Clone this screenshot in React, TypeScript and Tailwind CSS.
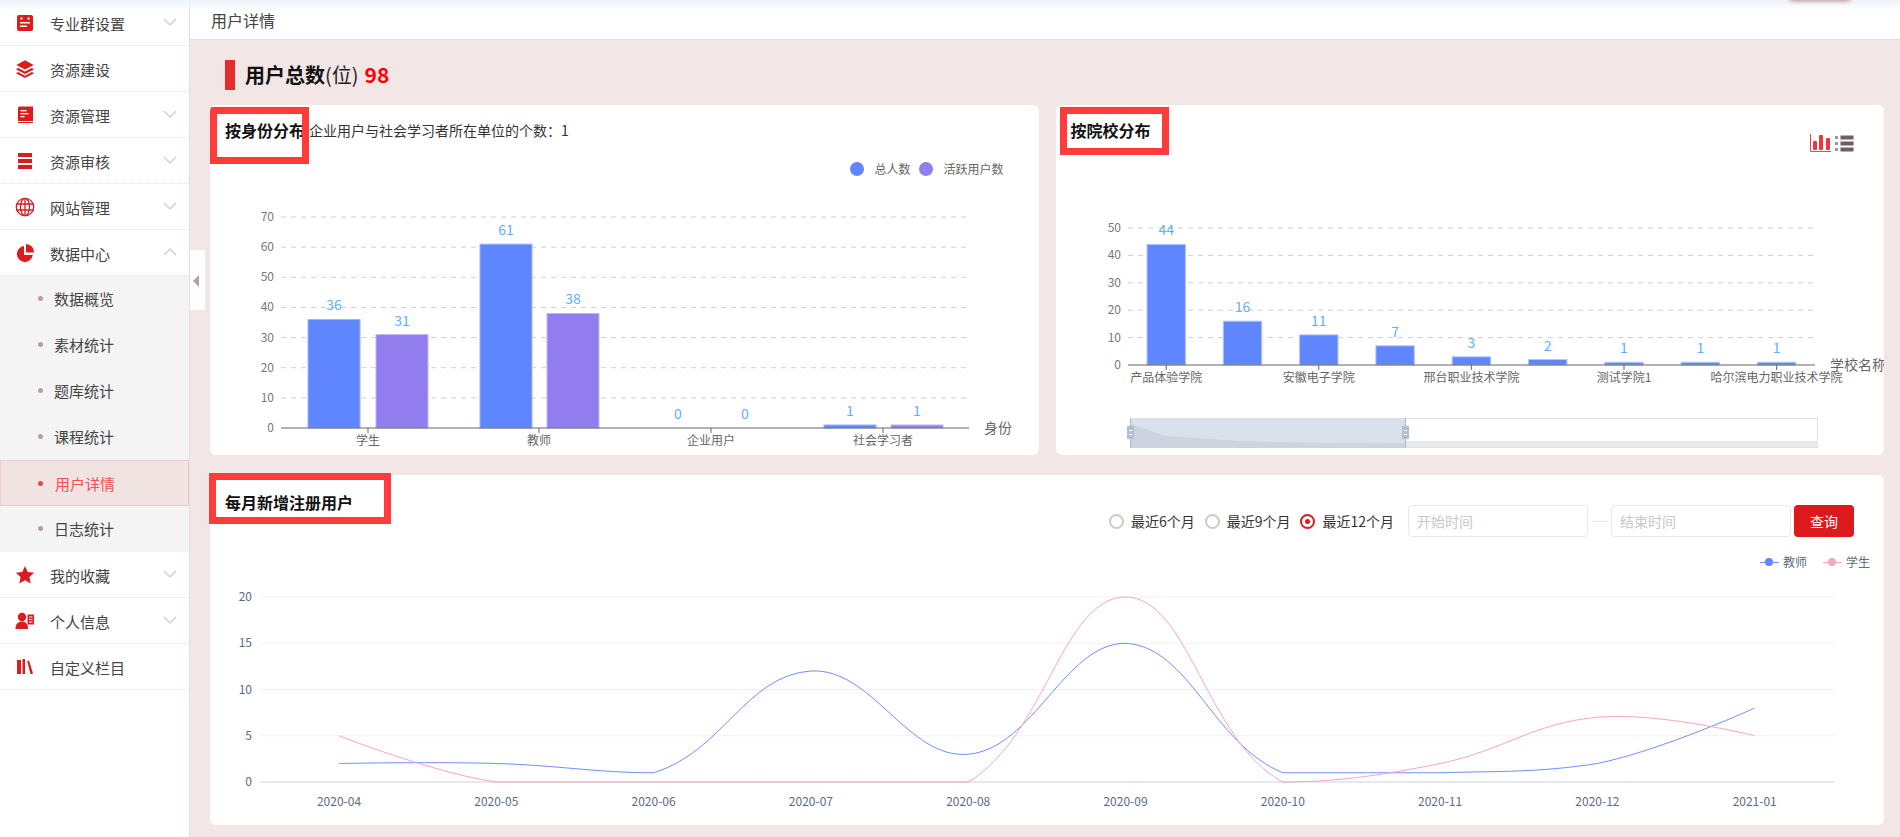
import React from 'react';

const FONT = "font-['Noto_Sans_CJK_SC','Noto_Sans',sans-serif]";
const RED = '#dd1a1e';

type IconProps = { className?: string };

const ProfessionIcon = () => (
    <svg width="20" height="20" viewBox="0 0 20 20">
        <rect x="2" y="2" width="16" height="16" rx="2" fill={RED} />
        <rect x="5.5" y="4.5" width="2" height="2" fill="#fff" />
        <rect x="12.5" y="4.5" width="2" height="2" fill="#fff" />
        <rect x="5" y="9" width="10" height="1.5" fill="#fff" />
        <rect x="5" y="12.5" width="7" height="1.5" fill="#fff" />
    </svg>
);

const LayersIcon = () => (
    <svg width="22" height="22" viewBox="0 0 22 22">
        <path d="M11 1.5 L20.5 6.5 L11 11.5 L1.5 6.5 Z" fill={RED} />
        <path d="M3.5 9.8 L1 11.2 L11 16.5 L21 11.2 L18.5 9.8 L11 13.8 Z" fill={RED} />
        <path d="M3.5 14.3 L1 15.7 L11 21 L21 15.7 L18.5 14.3 L11 18.3 Z" fill={RED} />
    </svg>
);

const BookIcon = () => (
    <svg width="20" height="20" viewBox="0 0 20 20">
        <path d="M3 3 a1.5 1.5 0 0 1 1.5 -1.5 H18 V16 H3 Z" fill={RED} />
        <rect x="3" y="17" width="15" height="1" fill={RED} />
        <rect x="5.5" y="5" width="6" height="1.3" fill="#fff" />
        <rect x="5.5" y="8" width="8" height="1.3" fill="#fff" />
        <rect x="5.5" y="11" width="4" height="1.3" fill="#fff" />
    </svg>
);

const BarsIcon = () => (
    <svg width="20" height="20" viewBox="0 0 20 20">
        <rect x="3" y="2" width="14" height="4" fill={RED} />
        <rect x="3" y="8" width="14" height="4" fill={RED} />
        <rect x="3" y="14" width="14" height="4" fill={RED} />
    </svg>
);

const GlobeIcon = () => (
    <svg width="20" height="20" viewBox="0 0 20 20" fill="none" stroke={RED} strokeWidth="1.3">
        <circle cx="10" cy="10" r="8.7" />
        <ellipse cx="10" cy="10" rx="4.5" ry="8.7" />
        <path d="M10 1.3 V18.7 M1.6 7 H18.4 M1.6 13 H18.4" />
    </svg>
);

const PieIcon = () => (
    <svg width="20" height="20" viewBox="0 0 20 20">
        <path d="M9 3 A8 8 0 1 0 17.8 12 H9 Z" fill={RED} />
        <path d="M11 1 A8 8 0 0 1 19 9.5 H11 Z" fill={RED} />
    </svg>
);

const StarIcon = () => (
    <svg width="20" height="20" viewBox="0 0 20 20">
        <path d="M10 1 L12.7 7 L19.2 7.7 L14.4 12.1 L15.7 18.5 L10 15.3 L4.3 18.5 L5.6 12.1 L0.8 7.7 L7.3 7 Z" fill={RED} />
    </svg>
);

const UserCardIcon = () => (
    <svg width="20" height="20" viewBox="0 0 20 20">
        <circle cx="7" cy="6" r="4.2" fill={RED} />
        <path d="M0.5 18 C0.5 12.5 3.5 10.5 7 10.5 C10.5 10.5 13 12.5 13 18 Z" fill={RED} />
        <rect x="12.5" y="3.5" width="6.5" height="10" fill={RED} />
        <rect x="14" y="5.5" width="3.5" height="1" fill="#fff" />
        <rect x="14" y="8" width="3.5" height="1" fill="#fff" />
        <rect x="14" y="10.5" width="3.5" height="1" fill="#fff" />
    </svg>
);

const BooksIcon = () => (
    <svg width="20" height="20" viewBox="0 0 20 20">
        <rect x="2" y="3" width="4" height="14" fill={RED} />
        <rect x="7.5" y="2" width="2.5" height="15" fill={RED} />
        <path d="M12.2 4 L14 3.4 L18 16.4 L15.5 17.2 Z" fill={RED} />
    </svg>
);

const Chevron = ({ up }: { up?: boolean }) => (
    <svg width="14" height="8" viewBox="0 0 14 8" fill="none" stroke="#cfcfcf" strokeWidth="1.4" className="mb-[2px]">
        <path d={up ? 'M1 7 L7 1 L13 7' : 'M1 1 L7 7 L13 1'} />
    </svg>
);

function MenuRow({ icon, label, arrow }: { icon: React.ReactNode; label: string; arrow?: 'up' | 'down' }) {
    return (
        <div className="flex h-[46px] items-center border-b border-dotted border-[#e2e2e2] pl-[15px] pr-[12px]">
            <span className="flex w-[20px] justify-center">{icon}</span>
            <span className="ml-[15px] flex-1 pt-[1px] text-[15px] leading-none text-[#444]">{label}</span>
            {arrow && <Chevron up={arrow === 'up'} />}
        </div>
    );
}

function SubRow({ label, active }: { label: string; active?: boolean }) {
    return (
        <div
            className={
                active
                    ? 'flex h-[46px] items-center border border-[#eecbcb] bg-[#f2e3e3] pl-[37px] text-[#f24f4f]'
                    : 'flex h-[46px] items-center pb-[1px] pl-[38px] text-[#444]'
            }
        >
            <span className={active ? 'h-[5px] w-[5px] rounded-full bg-[#e5484d]' : 'h-[5px] w-[5px] rounded-full bg-[#b89ea2]'}></span>
            <span className={active ? 'ml-[12px] text-[15px] leading-none' : 'ml-[11px] text-[15px] leading-none'}>{label}</span>
        </div>
    );
}

function Sidebar() {
    return (
        <aside className="h-full w-[190px] shrink-0 border-r border-[#eadcdc] bg-white">
            <MenuRow icon={<ProfessionIcon />} label="专业群设置" arrow="down" />
            <MenuRow icon={<LayersIcon />} label="资源建设" />
            <MenuRow icon={<BookIcon />} label="资源管理" arrow="down" />
            <MenuRow icon={<BarsIcon />} label="资源审核" arrow="down" />
            <MenuRow icon={<GlobeIcon />} label="网站管理" arrow="down" />
            <MenuRow icon={<PieIcon />} label="数据中心" arrow="up" />
            <div className="bg-[#f5f4f4]">
                <SubRow label="数据概览" />
                <SubRow label="素材统计" />
                <SubRow label="题库统计" />
                <SubRow label="课程统计" />
                <SubRow label="用户详情" active />
                <SubRow label="日志统计" />
            </div>
            <MenuRow icon={<StarIcon />} label="我的收藏" arrow="down" />
            <MenuRow icon={<UserCardIcon />} label="个人信息" arrow="down" />
            <MenuRow icon={<BooksIcon />} label="自定义栏目" />
        </aside>
    );
}

const CHART_FONT = "'Noto Sans CJK SC', sans-serif";

function Bar({ x, y, w, base, color, edge }: { x: number; y: number; w: number; base: number; color: string; edge: string }) {
    return <rect x={x} y={y} width={w} height={base - y} fill={color} stroke={edge} strokeWidth="1" />;
}

// chart 1: by identity
function IdentityChart() {
    const base = 428;
    const scale = 30.14 / 10;
    const ticks = [0, 10, 20, 30, 40, 50, 60, 70];
    const groups = [
        { name: '学生', center: 368, a: 36, b: 31, ax: 308, bx: 376 },
        { name: '教师', center: 539, a: 61, b: 38, ax: 480, bx: 547 },
        { name: '企业用户', center: 711, a: 0, b: 0, ax: 652, bx: 719 },
        { name: '社会学习者', center: 883, a: 1, b: 1, ax: 824, bx: 891 }
    ];
    return (
        <svg className="block" width="829" height="275" viewBox="210 180 829 275" fontFamily={CHART_FONT}>
            {ticks.map((t) => (
                <g key={t}>
                    {t > 0 && (
                        <line x1="281" x2="966" y1={base - t * scale} y2={base - t * scale} stroke="#cfcfcf" strokeDasharray="5 5" />
                    )}
                    <text x="274" y={base - t * scale + 4} textAnchor="end" fontSize="12" fill="#777">
                        {t}
                    </text>
                </g>
            ))}
            {groups.map((g) => (
                <g key={g.name}>
                    {g.a > 0 && <Bar x={g.ax} y={base - g.a * scale} w={52} base={base} color="#5f85ff" edge="#9db3ff" />}
                    {g.b > 0 && <Bar x={g.bx} y={base - g.b * scale} w={52} base={base} color="#917ded" edge="#c3b7f5" />}
                    <text x={g.ax + 26} y={base - g.a * scale - 9} textAnchor="middle" fontSize="14" fill="#5cb0ff">
                        {g.a}
                    </text>
                    <text x={g.bx + 26} y={base - g.b * scale - 9} textAnchor="middle" fontSize="14" fill="#5cb0ff">
                        {g.b}
                    </text>
                    <line x1={g.center} x2={g.center} y1={base} y2={base + 5} stroke="#666" />
                    <text x={g.center} y={base + 17} textAnchor="middle" fontSize="12" fill="#666">
                        {g.name}
                    </text>
                </g>
            ))}
            <line x1="281" x2="969" y1={base} y2={base} stroke="#666" />
            <text x="984" y={base + 5} fontSize="14" fill="#666">
                身份
            </text>
        </svg>
    );
}

// chart 2: by school, with the zoom slider under it
function SchoolChart() {
    const base = 365;
    const scale = 2.74;
    const ticks = [0, 10, 20, 30, 40, 50];
    const values = [44, 16, 11, 7, 3, 2, 1, 1, 1];
    const labels: Record<number, string> = {
        0: '产品体验学院',
        2: '安徽电子学院',
        4: '邢台职业技术学院',
        6: '测试学院1',
        8: '哈尔滨电力职业技术学院'
    };
    const left = 1128;
    const step = 76.3;
    return (
        <svg className="block" width="828" height="285" viewBox="1056 170 828 285" fontFamily={CHART_FONT}>
            {ticks.map((t) => (
                <g key={t}>
                    {t > 0 && (
                        <line x1="1128" x2="1813" y1={base - t * scale} y2={base - t * scale} stroke="#cfcfcf" strokeDasharray="5 5" />
                    )}
                    <text x="1121" y={base - t * scale + 4} textAnchor="end" fontSize="12" fill="#777">
                        {t}
                    </text>
                </g>
            ))}
            {values.map((v, i) => {
                const x = left + 19 + i * step;
                const cx = x + 19.2;
                return (
                    <g key={i}>
                        <Bar x={x} y={base - v * scale} w={38.4} base={base} color="#5f85ff" edge="#b4c4ff" />
                        <text x={cx} y={base - v * scale - 9} textAnchor="middle" fontSize="14" fill="#5cb0ff">
                            {v}
                        </text>
                        {labels[i] && (
                            <>
                                <line x1={cx} x2={cx} y1={base} y2={base + 5} stroke="#666" />
                                <text x={cx} y={base + 17} textAnchor="middle" fontSize="12" fill="#666">
                                    {labels[i]}
                                </text>
                            </>
                        )}
                    </g>
                );
            })}
            <line x1="1128" x2="1815" y1={base} y2={base} stroke="#666" />
            <text x="1830" y={base + 5} fontSize="14" fill="#666">
                学校名称
            </text>

            <rect x="1130.5" y="418.5" width="687" height="29" fill="#fff" stroke="#dfe2e8" />
            <path d="M1405 442 L1817 442 V447 H1405 Z" fill="#e9ebef" />
            <line x1="1405" x2="1817" y1="442" y2="442" stroke="#d8dbe2" />
            <rect x="1130" y="418" width="275.5" height="30" fill="#dbe1ea" />
            <path d="M1131 424 L1165 436 L1240 441 L1300 442.5 L1405 443 V448 H1131 Z" fill="#cdd4df" />
            <line x1="1130.5" x2="1130.5" y1="418" y2="448" stroke="#a8b8cf" />
            <line x1="1405.5" x2="1405.5" y1="418" y2="448" stroke="#a8b8cf" />
            {[1130.5, 1405.5].map((x) => (
                <g key={x}>
                    <rect x={x - 3.5} y="426" width="7" height="13" fill="#b0bfd4" />
                    <rect x={x - 1.5} y="430" width="3" height="1" fill="#fff" />
                    <rect x={x - 1.5} y="434" width="3" height="1" fill="#fff" />
                </g>
            ))}
        </svg>
    );
}

type Pt = [number, number];

// echarts style smooth line, control points are clamped to the bounding box of the series
function smoothPath(pts: Pt[]) {
    const smooth = 0.4;
    const minY = Math.min(...pts.map((p) => p[1]));
    const maxY = Math.max(...pts.map((p) => p[1]));
    const clamp = (y: number) => Math.max(minY, Math.min(maxY, y));
    let d = `M${pts[0][0]} ${pts[0][1]}`;
    const out: Pt[] = [];
    const inn: Pt[] = [];
    pts.forEach((p, i) => {
        const prev = pts[i - 1];
        const next = pts[i + 1];
        if (!prev || !next) {
            out.push(p);
            inn.push(p);
            return;
        }
        const vx = next[0] - prev[0];
        const vy = next[1] - prev[1];
        const d0 = Math.hypot(p[0] - prev[0], p[1] - prev[1]);
        const d1 = Math.hypot(next[0] - p[0], next[1] - p[1]);
        const ratio = d1 / (d0 + d1);
        out.push([p[0] + vx * smooth * ratio, clamp(p[1] + vy * smooth * ratio)]);
        inn.push([p[0] - vx * smooth * (1 - ratio), clamp(p[1] - vy * smooth * (1 - ratio))]);
    });
    for (let i = 1; i < pts.length; i++) {
        d += ` C${out[i - 1][0]} ${out[i - 1][1]} ${inn[i][0]} ${inn[i][1]} ${pts[i][0]} ${pts[i][1]}`;
    }
    return d;
}

// chart 3: monthly registrations
function MonthlyChart() {
    const base = 782;
    const unit = 9.25;
    const months = ['2020-04', '2020-05', '2020-06', '2020-07', '2020-08', '2020-09', '2020-10', '2020-11', '2020-12', '2021-01'];
    const teacher = [2, 2, 1, 12, 3, 15, 1, 1, 2, 8];
    const student = [5, 0, 0, 0, 0, 20, 0, 2, 7, 5];
    const toPts = (arr: number[]): Pt[] => arr.map((v, i) => [339 + i * 157.3, base - v * unit]);
    return (
        <svg className="block" width="1674" height="250" viewBox="210 575 1674 250" fontFamily={CHART_FONT}>
            {[0, 5, 10, 15, 20].map((t) => (
                <g key={t}>
                    <line x1="260" x2="1834" y1={base - t * unit} y2={base - t * unit} stroke={t === 0 ? '#ccd3dc' : '#eef0f2'} />
                    <text x="252" y={base - t * unit + 4} textAnchor="end" fontSize="12" fill="#5b6b81">
                        {t}
                    </text>
                </g>
            ))}
            <path d={smoothPath(toPts(teacher))} fill="none" stroke="#6d8fff" />
            <path d={smoothPath(toPts(student))} fill="none" stroke="#f7a5c0" />
            {months.map((m, i) => (
                <text key={m} x={339 + i * 157.3} y="806" textAnchor="middle" fontSize="12" fill="#5b6b81">
                    {m}
                </text>
            ))}
        </svg>
    );
}

function ChartToggles() {
    return (
        <div className="flex items-center gap-[4px]">
            <svg width="21" height="19" viewBox="0 0 21 19">
                <path d="M0.5 0 V17.5 H21" fill="none" stroke="#e8474c" />
                <rect x="3" y="7" width="4" height="9" rx="1" fill="#e8383d" />
                <rect x="9" y="1" width="4" height="15" rx="1" fill="#e8383d" />
                <rect x="16" y="4" width="4" height="12" rx="1" fill="#e8383d" />
            </svg>
            <svg width="19" height="17" viewBox="0 0 19 17">
                <rect x="0" y="1" width="3" height="3" fill="#999" />
                <rect x="0" y="7" width="3" height="3" fill="#999" />
                <rect x="0" y="13" width="3" height="3" fill="#999" />
                <rect x="5.5" y="0.5" width="13" height="4" fill="#6b5f5f" />
                <rect x="5.5" y="6.5" width="13" height="4" fill="#6b5f5f" />
                <rect x="5.5" y="12.5" width="13" height="4" fill="#6b5f5f" />
            </svg>
        </div>
    );
}

function Radio({ label, checked }: { label: string; checked?: boolean }) {
    return (
        <label className="flex items-center gap-[7px] text-[14px] leading-none text-[#333]">
            {checked ? (
                <span className="flex h-[15px] w-[15px] items-center justify-center rounded-full border-[2.5px] border-[#dd1a1e]">
                    <span className="h-[5px] w-[5px] rounded-full bg-[#dd1a1e]"></span>
                </span>
            ) : (
                <span className="h-[15px] w-[15px] rounded-full border-[2.5px] border-[#cdc9c9]"></span>
            )}
            {label}
        </label>
    );
}

function DateInput({ placeholder }: { placeholder: string }) {
    return (
        <div className="flex h-[32px] w-[180px] items-center rounded-[4px] border border-[#e8e8e8] pl-[8px] text-[14px] text-[#c8c8c8]">
            {placeholder}
        </div>
    );
}

const AnnotationBox = ({ className }: IconProps) => (
    <div className={`pointer-events-none absolute border-[7px] border-[#ff3b3b] ${className}`}></div>
);

export default function App() {
    return (
        <div className={`relative flex h-screen w-full overflow-hidden bg-[#f2e6e6] ${FONT}`}>
            <Sidebar />

            <div className="absolute left-[190px] top-[250px] flex h-[60px] w-[15px] items-center bg-white pl-[3px]">
                <span className="mb-[-1px] h-0 w-0 border-y-[6px] border-r-[6px] border-y-transparent border-r-[#b89ea2]"></span>
            </div>

            <main className="min-w-0 flex-1">
                <header className="flex h-[40px] items-center border-b border-[#ecdcdc] bg-white pl-[21px] pt-[1px] text-[16px] text-[#444]">
                    用户详情
                </header>

                <div className="pl-[20px] pr-[16px]">
                    <div className="flex h-[65px] items-center pl-[15px] pt-[5px]">
                        <span className="h-[30px] w-[10px] bg-[#e32d2d]"></span>
                        <h1 className="ml-[10px] text-[20px] font-bold text-[#111]">用户总数</h1>
                        <span className="text-[20px] text-[#222]">(位)</span>
                        <span className="ml-[6px] text-[21px] font-bold text-[#ff0000]">98</span>
                    </div>

                    <div className="grid grid-cols-2 gap-x-[17px]">
                        <section className="relative h-[350px] overflow-hidden rounded-[6px] bg-white">
                            <div className="flex h-[54px] items-start pl-[15px] pt-[14px] leading-[22px]">
                                <span className="text-[16px] font-bold text-[#111]">按身份分布</span>
                                <span className="ml-[4px] text-[14px] text-[#333]">企业用户与社会学习者所在单位的个数：1</span>
                            </div>
                            <div className="flex h-[21px] items-center justify-end pb-[1px] pr-[35px] text-[12px] text-[#666]">
                                <span className="h-[14px] w-[14px] rounded-full bg-[#5f85ff]"></span>
                                <span className="ml-[10px]">总人数</span>
                                <span className="ml-[9px] h-[14px] w-[14px] rounded-full bg-[#917ded]"></span>
                                <span className="ml-[10px]">活跃用户数</span>
                            </div>
                            <IdentityChart />
                            <AnnotationBox className="left-0 top-[2px] h-[57px] w-[99px]" />
                        </section>

                        <section className="relative h-[350px] overflow-hidden rounded-[6px] bg-white">
                            <div className="flex h-[65px] items-start justify-between pl-[15px] pr-[30px] pt-[14px]">
                                <span className="text-[16px] font-bold leading-[22px] text-[#111]">按院校分布</span>
                                <div className="mt-[15px]">
                                    <ChartToggles />
                                </div>
                            </div>
                            <SchoolChart />
                            <AnnotationBox className="left-[4px] top-[2px] h-[48px] w-[109px]" />
                        </section>
                    </div>

                    <section className="relative mt-[20px] h-[350px] rounded-[6px] bg-white">
                        <div className="flex items-start justify-between pl-[15px] pr-[30px] pt-[16px]">
                            <h2 className="text-[16px] font-bold leading-[22px] text-[#111]">每月新增注册用户</h2>
                            <div className="mt-[14px] flex items-center">
                                <div className="mr-[14px] flex items-center gap-[10px]">
                                    <Radio label="最近6个月" />
                                    <Radio label="最近9个月" />
                                    <Radio label="最近12个月" checked />
                                </div>
                                <DateInput placeholder="开始时间" />
                                <span className="mx-[4.5px] h-px w-[14px] bg-[#e4e4e4]"></span>
                                <DateInput placeholder="结束时间" />
                                <button className="ml-[3px] h-[32px] w-[60px] rounded-[4px] bg-[#dc1a1e] text-[14px] text-white">查询</button>
                            </div>
                        </div>
                        <div className="flex h-[38px] items-center justify-end gap-[16px] pr-[14px] pt-[12px] text-[12px] text-[#5b6b81]">
                            <span className="flex items-center gap-[4px]">
                                <span className="relative flex h-[8px] w-[19px] items-center justify-center">
                                    <span className="absolute h-px w-full bg-[#6d8fff]"></span>
                                    <span className="h-[8px] w-[8px] rounded-full bg-[#5f85ff]"></span>
                                </span>
                                教师
                            </span>
                            <span className="flex items-center gap-[4px]">
                                <span className="relative flex h-[8px] w-[19px] items-center justify-center">
                                    <span className="absolute h-px w-full bg-[#f7a5c0]"></span>
                                    <span className="h-[8px] w-[8px] rounded-full bg-[#f7a5c0]"></span>
                                </span>
                                学生
                            </span>
                        </div>
                        <MonthlyChart />
                        <AnnotationBox className="-left-[1px] -top-[2px] z-10 h-[51px] w-[182px]" />
                    </section>
                </div>
            </main>

            <div className="pointer-events-none absolute left-0 right-0 top-0 h-[12px] bg-gradient-to-b from-[#f0f4f8] to-transparent"></div>
            <div className="absolute left-[1790px] top-[-6px] h-[6px] w-[60px] shadow-[0_1px_4px_rgba(150,70,70,0.6)]"></div>
        </div>
    );
}
